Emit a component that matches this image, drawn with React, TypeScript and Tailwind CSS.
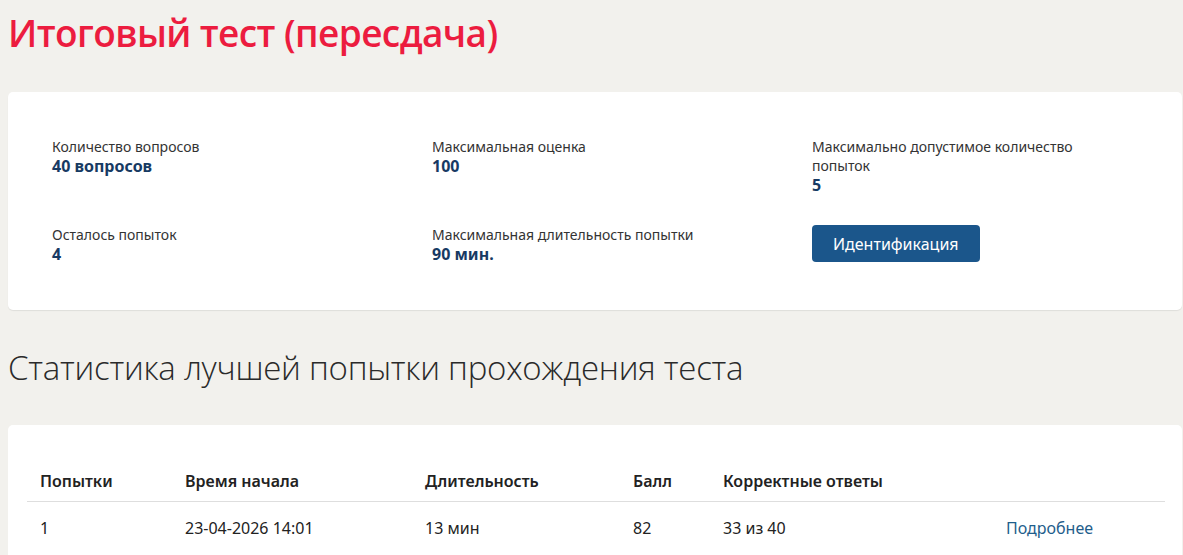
import React from 'react';

const stats = [
  { label: 'Количество вопросов', value: '40 вопросов' },
  { label: 'Максимальная оценка', value: '100' },
  { label: 'Максимально допустимое количество попыток', value: '5' },
  { label: 'Осталось попыток', value: '4' },
  { label: 'Максимальная длительность попытки', value: '90 мин.' },
];

const attempts = [
  { n: 1, start: '23-04-2026 14:01', duration: '13 мин', score: 82, correct: '33 из 40' },
];

function App() {
  return (
    <div className="min-h-screen bg-[#f2f1ed] pl-[8px] pr-[1px] pt-[10px] text-[#222] font-['Noto_Sans',sans-serif]">
      <h1 className="text-[37px] leading-[46px] font-semibold text-[#ec1c3f] font-['Open_Sans',sans-serif] tracking-[-0.6px]">
        Итоговый тест (пересдача)
      </h1>

      <div className="mt-[36px] bg-white rounded-[5px] shadow-[0_1px_1px_rgba(0,0,0,0.08)] pl-[44px] pr-[40px] pt-[45px] pb-[46px]">
        <div className="grid grid-cols-[380px_380px_300px] gap-y-[30px]">
          {stats.map((s) => (
            <div key={s.label}>
              <p className="text-[14px] leading-[19px] text-[#333]">{s.label}</p>
              <p className="text-[16px] leading-[20px] font-bold text-[#173a63]">{s.value}</p>
            </div>
          ))}
          <div>
            <button className="h-[37px] px-[21px] rounded-[4px] bg-[#1b568b] text-white text-[16px]">
              Идентификация
            </button>
          </div>
        </div>
      </div>

      <h2 className="mt-[36px] text-[33px] leading-[44px] font-light text-[#2a2a2a] font-['Open_Sans',sans-serif] tracking-[-0.25px]">
        Статистика лучшей попытки прохождения теста
      </h2>

      <div className="mt-[35px] bg-white rounded-[5px] pl-[19px] pr-[17px] pt-[36px] pb-[10px]">
        <table className="w-full table-fixed text-left text-[16px] border-collapse">
          <thead>
            <tr className="border-b border-[#dedede]">
              <th className="w-[158px] pl-[13px] h-[40px] font-semibold">Попытки</th>
              <th className="w-[240px] font-semibold">Время начала</th>
              <th className="w-[208px] font-semibold">Длительность</th>
              <th className="w-[90px] font-semibold">Балл</th>
              <th className="w-[283px] font-semibold">Корректные ответы</th>
              <th></th>
            </tr>
          </thead>
          <tbody>
            {attempts.map((a) => (
              <tr key={a.n}>
                <td className="pl-[13px] py-[16px] leading-[20px]">{a.n}</td>
                <td>{a.start}</td>
                <td>{a.duration}</td>
                <td>{a.score}</td>
                <td>{a.correct}</td>
                <td>
                  <a href="#" className="text-[#1f5e8c]">
                    Подробнее
                  </a>
                </td>
              </tr>
            ))}
          </tbody>
        </table>
      </div>
    </div>
  );
}

export default App;
